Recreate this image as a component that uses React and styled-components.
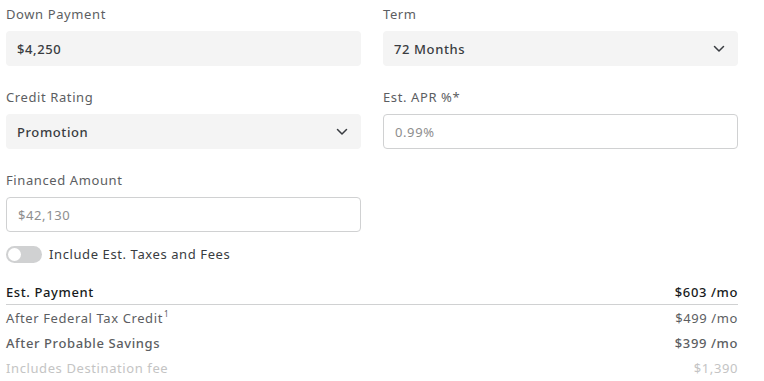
import styled, { createGlobalStyle } from "styled-components";

const Global = createGlobalStyle`
  body {
    margin: 0;
    background: #fff;
    font-family: "Noto Sans", "Open Sans", sans-serif;
    -webkit-font-smoothing: antialiased;
  }
`;

const Page = styled.div`
  width: 732px;
  padding: 4px 0 0 6px;
`;

const Grid = styled.div`
  display: grid;
  grid-template-columns: 355px 355px;
  column-gap: 22px;
  row-gap: 21px;
`;

const Field = styled.div`
  display: flex;
  flex-direction: column;
`;

const Label = styled.div`
  font-size: 13px;
  line-height: 20px;
  color: #5c5e62;
  margin-bottom: 7px;
  letter-spacing: 0.6px;
`;

const Box = styled.div`
  height: 35px;
  box-sizing: border-box;
  display: flex;
  align-items: center;
  justify-content: space-between;
  padding: 0 13px 0 11px;
  border-radius: 4px;
  font-size: 13px;
  letter-spacing: 0.6px;
  background: ${(p) => (p.$outlined ? "#fff" : "#f4f4f4")};
  border: ${(p) => (p.$outlined ? "1px solid #d0d1d2" : "none")};
  color: ${(p) => (p.$outlined ? "#8e8e8e" : "#393c41")};
  font-weight: ${(p) => (p.$outlined ? 400 : 500)};
`;

const Chevron = () => (
  <svg width="12" height="8" viewBox="0 0 12 8" fill="none">
    <path d="M1.5 1.5L6 6l4.5-4.5" stroke="#393c41" strokeWidth="1.5" strokeLinecap="round" strokeLinejoin="round" />
  </svg>
);

const ToggleRow = styled.label`
  display: flex;
  align-items: center;
  gap: 7px;
  height: 20px;
  margin-top: 12px;
  font-size: 13px;
  color: #393c41;
  letter-spacing: 0.6px;
`;

const Track = styled.span`
  position: relative;
  width: 36px;
  height: 17px;
  border-radius: 9px;
  background: #d0d1d2;
  &::after {
    content: "";
    position: absolute;
    left: 2px;
    top: 2px;
    width: 13px;
    height: 13px;
    border-radius: 50%;
    background: #fff;
  }
`;

const Summary = styled.div`
  margin-top: 15px;
`;

const Row = styled.div`
  display: flex;
  justify-content: space-between;
  align-items: center;
  height: 25px;
  font-size: 13px;
  letter-spacing: 0.6px;
  color: ${(p) => p.$color || "#5c5e62"};
  font-weight: ${(p) => p.$weight || 400};
  border-bottom: ${(p) => (p.$divider ? "1px solid #d0d1d2" : "none")};
  sup {
    font-size: 8px;
    vertical-align: top;
    line-height: 10px;
    margin-left: 1px;
  }
`;

export default function App() {
  return (
    <Page>
      <Global />
      <Grid>
        <Field>
          <Label>Down Payment</Label>
          <Box>$4,250</Box>
        </Field>
        <Field>
          <Label>Term</Label>
          <Box>
            72 Months
            <Chevron />
          </Box>
        </Field>
        <Field>
          <Label>Credit Rating</Label>
          <Box>
            Promotion
            <Chevron />
          </Box>
        </Field>
        <Field>
          <Label>Est. APR %*</Label>
          <Box $outlined>0.99%</Box>
        </Field>
        <Field>
          <Label>Financed Amount</Label>
          <Box $outlined>$42,130</Box>
        </Field>
      </Grid>
      <ToggleRow>
        <Track />
        Include Est. Taxes and Fees
      </ToggleRow>
      <Summary>
        <Row $divider $color="#171a20" $weight={500}>
          <span>Est. Payment</span>
          <span>$603 /mo</span>
        </Row>
        <Row>
          <span>
            After Federal Tax Credit<sup>1</sup>
          </span>
          <span>$499 /mo</span>
        </Row>
        <Row $weight={500}>
          <span>After Probable Savings</span>
          <span>$399 /mo</span>
        </Row>
        <Row $color="#c4c4c4">
          <span>Includes Destination fee</span>
          <span>$1,390</span>
        </Row>
      </Summary>
    </Page>
  );
}
